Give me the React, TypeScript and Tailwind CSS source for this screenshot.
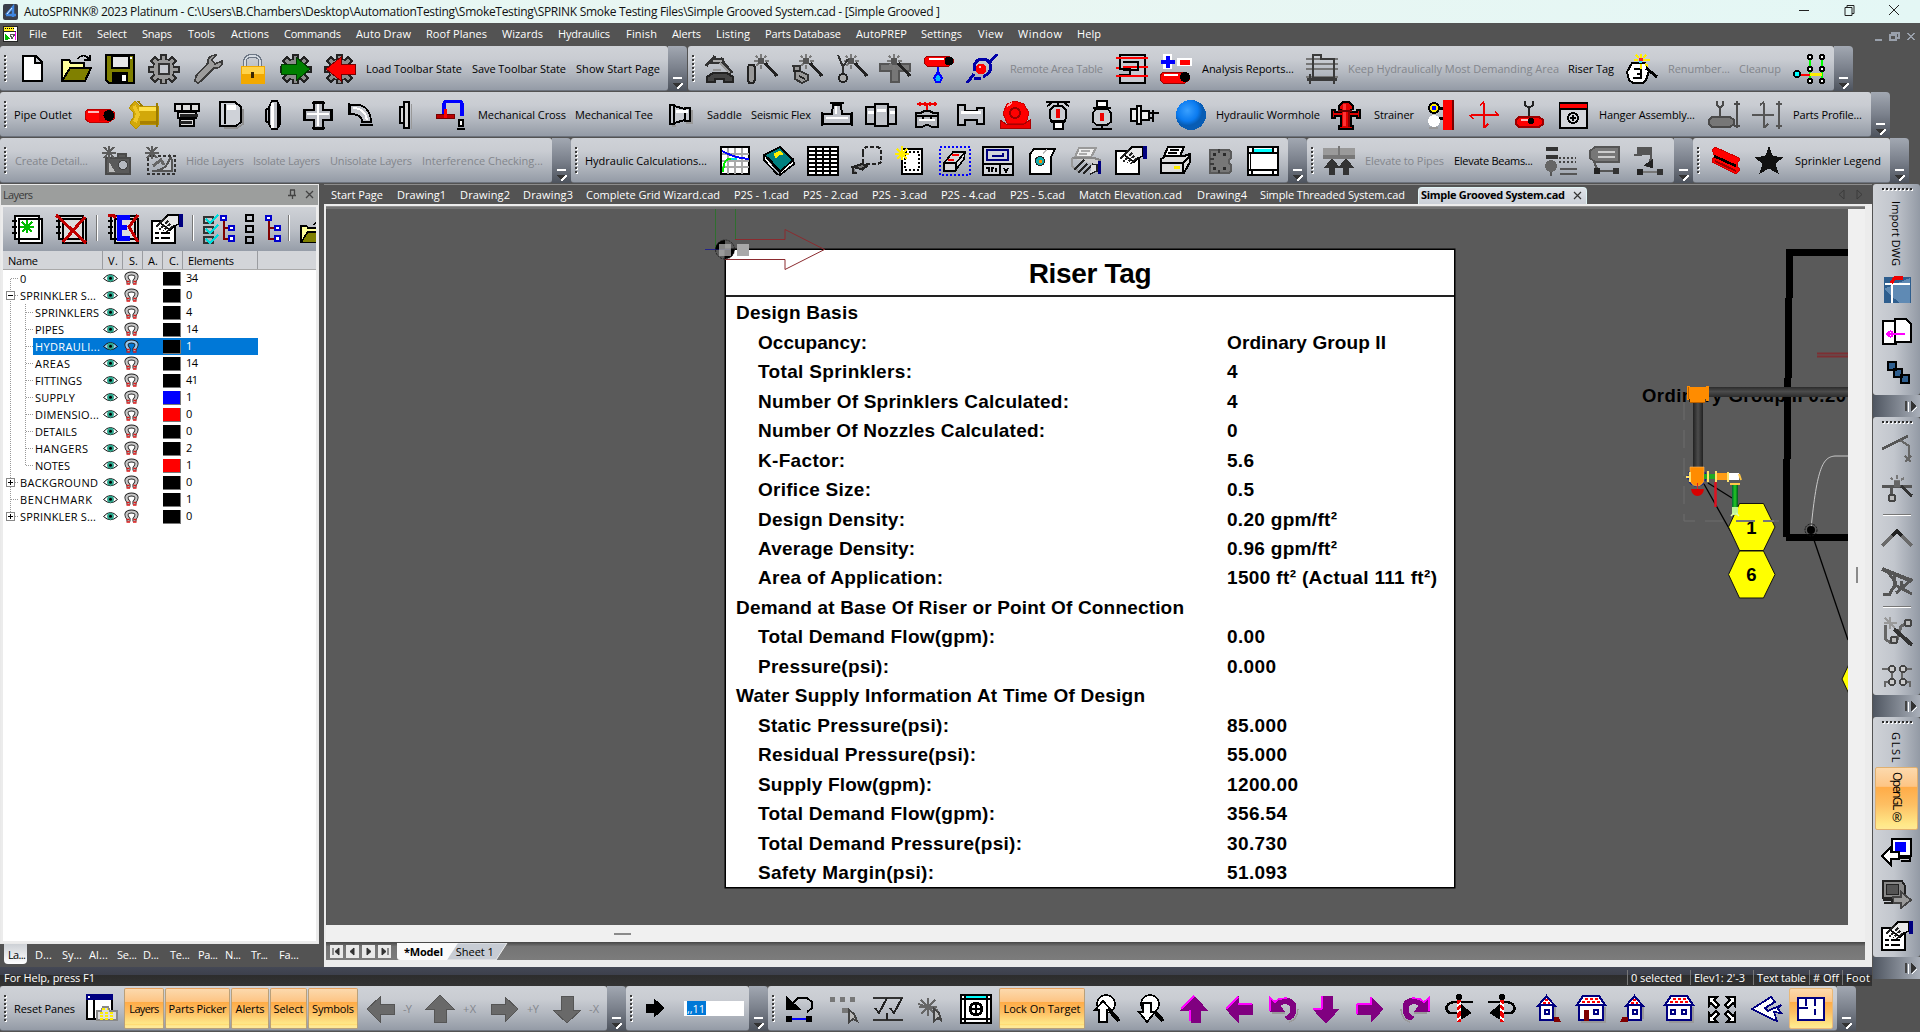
import React, { useLayoutEffect, useRef, useState } from "react";

/* ---------- text fitted to a given run length ---------- */
function Fit({ w, children, className = "", vertical = false }: { w: number; children: string; className?: string; vertical?: boolean }) {
  const ref = useRef<HTMLSpanElement>(null);
  const [ls, setLs] = useState<number | null>(null);
  useLayoutEffect(() => {
    const el = ref.current;
    if (!el || ls !== null) return;
    const natural = vertical ? el.offsetHeight : el.getBoundingClientRect().width;
    setLs((w - natural) / Math.max(1, children.length - 1));
  });
  return (
    <span
      ref={ref}
      className={"inline-block whitespace-pre leading-none shrink-0 " + (vertical ? "[writing-mode:vertical-rl] " : "") + className}
      style={ls === null ? undefined : { letterSpacing: ls }}
    >
      {children}
    </span>
  );
}

/* ---------- items along a bar ---------- */
type Item = { a: number; s: number; n: React.ReactNode };
function Track({ from, items, vertical = false, className = "" }: { from: number; items: Item[]; vertical?: boolean; className?: string }) {
  let prev = from;
  return (
    <div className={"flex items-center " + (vertical ? "flex-col w-full " : "h-full ") + className}>
      {items.map((it, k) => {
        const gap = it.a - prev;
        prev = it.a + it.s;
        return (
          <div
            key={k}
            className={"shrink-0 flex items-center " + (vertical ? "justify-center" : "")}
            style={vertical ? { marginTop: gap, height: it.s } : { marginLeft: gap, width: it.s }}
          >
            {it.n}
          </div>
        );
      })}
    </div>
  );
}

const P = (d: string, f = "none", s = "#000", w = 2) => <path d={d} fill={f} stroke={s} strokeWidth={w} />;
const W = "#fff";
const gearPath = "M13 1h5v4l3 1 3-3 4 4-3 3 1 3h5v5h-5l-1 3 3 3-4 4-3-3-3 1v4h-5v-4l-3-1-3 3-4-4 3-3-1-3H1v-5h4l1-3-3-3 4-4 3 3 3-1z";
const wand = (c: string) => (
  <g>
    {P("M19 9L31 22", "none", "#222", 3)}
    {P("M15 0v4M15 11v4M8 7h4M19 7h4M10 2l2 2M20 2l-2 2M10 12l2-2", "none", "#7b7b7b", 1.6)}
    <rect x="12" y="4" width="6" height="6" fill={c} />
  </g>
);
const hand = (g: string) => (
  <g>
    {P("M9 9L17 1h11v9l-5 2-4 4z", g, "#000", 1.6)}
    {P("M5 13L14 4M8 16l9-9M12 17l7-7M16 18l5-6", "none", "#222", 1.6)}
    {P("M7 12l8 5M11 8l8 6", "none", "#fff", 1)}
    <rect x="28" y="0" width="4" height="13" fill="#000080" />
  </g>
);
const house = (door: React.ReactNode, wide: boolean) => (
  <g>
    {wide ? P("M2 11L8 2h16l6 9z", W, "#000080") : P("M7 12L15.5 2 24 12z", W, "#000080")}
    {wide ? P("M7 8h3M12 8h3M17 8h3M22 8h3M10 5h3M15 5h3M20 5h3", "none", "#f00", 2.2) : P("M12 9h3M17 9h2M14 6h3", "none", "#f00", 2.2)}
    {wide ? P("M4 11h24v15H4z", W, "#000080") : P("M9 11h13v15H9z", W, "#000080")}
    {P(wide ? "M30 13v15H6" : "M24 13v12", "none", "#999", 1.4)}
    {door}
  </g>
);
const curvedArrow = (
  <g>
    {P("M3 4l5 4c5-6 21-6 21 6 0 7-3 11-8 12l-3-3c4-1 6-4 6-8 0-6-8-7-11-3l4 5H3z", "#800080", "#800080", 1)}
    {P("M3 17V4l5 4 4-3 8-1", "none", "#f0f", 1.8)}
    {P("M22 28c6-1 9-7 9-13M5 19h13", "none", "#999", 1.4)}
  </g>
);

const ICONS: Record<string, React.ReactNode> = {
  new: P("M6 2h13l6 6v19H6zM18 2v7h7", W),
  open: <g>{P("M1 27V6h7l2 3h13v5", "#ffff9a")}{P("M1 27L9 14h21l-6 13z", "#808000")}{P("M17 5c3-5 8-4 11 0M29 1v5h-6", "none", "#000", 1.5)}</g>,
  save: <g>{P("M2 1h28v28H5l-3-3z", "#808000")}{P("M8 2h17v12H8z", "#e8e8e8")}{P("M9 19h14v10H9z", "#000")}<rect x="18" y="21" width="4" height="6" fill={W} /><rect x="26" y="3" width="2" height="2" fill={W} /></g>,
  gear: <g>{P(gearPath, "#9a9a9a", "#2c2c2c", 1.6)}{P("M11 10h10v10H11z", "#c4c7cd", "#333")}</g>,
  wrench: <g>{P("M2 27l1-5L15 9c-1-5 3-8 8-8l-4 5 3 4 7-3c1 5-4 8-8 7L8 27l-3 2z", "#9c9c9c", "#3c3c3c", 1.6)}</g>,
  lock: <g>{P("M8 14V7c0-7 15-7 15 0v7", "none", "#6d7785", 4)}{P("M8 14V7c0-7 15-7 15 0v7", "none", "#d5dbe2", 1.5)}<rect x="4" y="12" width="24" height="18" fill="#f2a900" /><rect x="5" y="13" width="22" height="7" fill="#ffd34a" /><rect x="14" y="18" width="3" height="6" fill="#3a2600" /></g>,
  gearG: <g>{P(gearPath, "#8c8c8c", "#222", 1.6)}{P("M1 10h15V3l14 12-14 12v-7H1z", "#008000", "#003c00", 1)}</g>,
  gearR: <g>{P(gearPath, "#8c8c8c", "#222", 1.6)}{P("M31 10H17V3L2 15l15 12v-7h14z", "#f00", "#700", 1)}</g>,
  helmet: <g>{P("M2 12L11 2M16 4l12 15", "none", "#333", 3)}{P("M9 5h10v4H7z", "#aaa", "#333", 1.6)}{P("M3 28v-5l6-4h14l6 4v5h-9v-3H11v3z", "#444", "#222")}{P("M16 9l10 10M9 16h8", "none", "#999", 2)}</g>,
  wandO: <g>{wand("#555")}{P("M3 11h5l1 3v12l-2 3H3l-1-3V13z", "#999", "#222")}</g>,
  wandE: <g>{wand("#555")}{P("M2 12h7v5l8 4v5l-6 3-7-4v-8z", "#999", "#333")}{P("M2 17h7M8 22l6 3", "none", "#222")}</g>,
  wandH: <g>{wand("#555")}{P("M2 1l5 12 5-8M7 13v7", "none", "#333")}<circle cx="7" cy="24" r="4" fill="#aaa" stroke="#222" strokeWidth="2" /></g>,
  wandT: <g>{P("M1 10h30v7H20v11h-8V17H1z", "#777", "#555")}{wand("#555")}</g>,
  pipeDrop: <g>{P("M4 2h22l4 3v4l-4 3H4L1 9V5z", "#f00", "#900", 1)}{P("M6 5h15", "none", W)}<circle cx="26" cy="7" r="4.5" fill="#000" />{P("M15 13v7", "none", "#00f")}{P("M15 18l4 6-2 4h-4l-2-4z", "#0bf", "#00f")}</g>,
  swirl: <g>{P("M1 29l7-9M24 8L31 0M9 17c-3-8 3-12 8-12 8 1 9 8 6 14l-6 4M8 24h7", "none", "#0000a8", 3)}<circle cx="15" cy="15" r="5.5" fill="#f00" /><circle cx="14" cy="13" r="1.6" fill="#fbb" /></g>,
  plot: <g>{P("M4 1h25v28H4v-8h10v-6H4z", "#c9ccd2")}{P("M0 4h32M0 14h3M7 13h25M0 22h32", "none", "#f00")}{P("M7 8h15v8H7", "none", "#000")}</g>,
  plusminus: <g><rect x="3" y="0" width="9" height="15" fill={W} /><rect x="17" y="4" width="15" height="8" fill={W} />{P("M1 8h14M8 2v12", "none", "#00f", 4)}{P("M20 8h10", "none", "#f00", 5)}{P("M3 18h22l4 3v5l-4 3H3L0 26v-4z", "#f00", "#900", 1)}{P("M4 21h14", "none", W)}<circle cx="25" cy="23" r="5" fill="#000" /></g>,
  plotG: <g>{P("M0 5h32M0 10h32M0 15h32M0 23h32", "none", "#777")}{P("M7 1h8v4h13v19H7zM4 20v10M28 20v10", "none", "#3a3a3a")}{P("M1 25h30", "none", "#3a3a3a", 3)}</g>,
  three: <g>{P("M6 9h13l4 8-3 9-3 3H7l-4-3-2-8z", W)}{P("M8 15h7v5h-4M15 19v5H7", "none", "#000", 2.2)}{P("M20 14l11 9", "none", "#000", 3)}{P("M15 0v4M15 10v5M8 6h4M17 6h7M10 1l3 3M20 1l-3 3M19 10l3 2", "none", "#fe0", 2)}<rect x="13" y="4" width="4" height="3" fill="#f22" /><rect x="13" y="7" width="3" height="2" fill="#2df" /></g>,
  nodes: <g>{P("M17 4v22M29 4v22", "none", "#0f0")}{P("M17 20h12", "none", "#fe0", 3)}{P("M5 21h12", "none", "#f00")}<circle cx="4" cy="20" r="3" fill="#0ff" stroke="#000" strokeWidth="1.6" />{[3, 15, 27].map((y) => [17, 29].map((x) => <circle key={x * 40 + y} cx={x} cy={y} r="2.2" fill={W} stroke="#000" strokeWidth="1.6" />))}</g>,
  pipeR: <g>{P("M5 9h20l5 3v7l-5 3H5l-4-3v-7z", "#f00", "#b00", 1)}{P("M4 12h14", "none", "#fbb", 2)}<rect x="15" y="10" width="10" height="11" fill="#d00" /><circle cx="25" cy="15.500" r="5.500" fill="#000" /></g>,
  wye: <g>{P("M1 8l6-7 5 5h18v18H13l-5 5-6-6 3-5V12z", "#d2a80a", "#b89200", 1)}{P("M11 9h17", "none", "#ffe04a", 4)}{P("M6 6l4 8-3 8", "none", "#eec628", 4)}{P("M29 3v24M10 1l4 5", "none", "#9a7a00")}{P("M12 22h16", "none", "#a88000", 3)}</g>,
  cap: <g>{P("M4 4h24v7H4zM7 12h18v6H7zM9 19h14v7H9z", "#ddd", "#000", 2.2)}{P("M11 4v7M20 4v7", "none", "#000")}{P("M9 15h18M9 22h12", "none", "#222", 3)}</g>,
  elbowD: <g>{P("M4 2h15l6 5v15l-5 4H4zM9 4v20", "#cfd2d8")}<rect x="11" y="5" width="9" height="5" fill={W} />{P("M27 9v15l-6 4H8", "none", "#8f8f8f", 1.6)}</g>,
  coup: <g>{P("M14 1h5l3 6v17l-3 5h-5l-3-5V7z", "#bfc2c8")}{P("M14 3v25", "none", W, 3)}{P("M20 4v22M11 8l-3 2v11l3 2", "none", "#000", 2)}</g>,
  cross: <g>{P("M12 2h9v8h9v10h-9v9h-9v-9H2V10h10z", "#b8bbc2")}{P("M16 4v22M5 14h22", "none", W, 2.5)}{P("M10 3h13M3 9v12M29 9v12M10 28h13", "none", "#000", 2.4)}</g>,
  elbow: <g>{P("M4 5h10c7 2 11 9 11 17h-9c0-5-3-8-12-8z", "#c3c6cc", "#000", 1.8)}{P("M3 3v12M14 25h13", "none", "#000", 2)}{P("M7 8c8 0 13 5 14 12", "none", W, 2)}</g>,
  cap2: <g>{P("M14 2h5v26h-5zM13 7h-3v16h3", "#dadada", "#000", 2.2)}{P("M21 4v25", "none", "#999", 1)}</g>,
  hose: <g>{P("M9 16V4q0-3 3-3h10q5 0 5 4v11", "none", "#00f", 3.4)}{P("M1 14h18v4H1z", "#b00", "#700", 1)}{P("M10 9v9", "none", "#f00", 3)}{P("M24 20h4v6h-4zM22 29h8", W, "#000", 1.6)}</g>,
  bell: <g>{P("M5 5h4v19H5zM9 6l11 3v11L9 23zM20 8h5v13h-5z", "#c9ccd2")}{P("M11 11h12", "none", W, 3)}{P("M7 26h4M27 10v13h-6", "none", "#999", 1.4)}</g>,
  tee: <g>{P("M2 14h9l1-9h8l1 9h9v10H2z", "#c0c3ca")}{P("M9 3h14M1 12v14M31 12v14", "none", "#000", 2.4)}{P("M5 18h22M15 6v8", "none", W, 2.5)}</g>,
  coup3: <g>{P("M1 7h9v17H1zM10 4h13v22H10zM23 7h8v17h-8z", "#bfc2c8", "#000", 2.2)}{P("M3 12h6M12 10h9M25 12h5", "none", W, 3)}</g>,
  valve: <g>{P("M6 4h20M9 2v4M14 2v4M19 2v4M24 2v4M16 4v8", "none", "#e00", 1.8)}{P("M5 13h5l3-2h6l3 2h5v14h-6l-4-2h-2l-4 2H5z", "#b4b7bd")}{P("M5 16h22M12 16v3M20 16v3", "none", "#000", 1.5)}{P("M8 20h16", "none", W, 2)}</g>,
  reducer: <g>{P("M3 5h7v6h12V8h7v16h-7v-4H10v5H3z", "#c3c6cc")}{P("M6 12h20", "none", W, 3)}</g>,
  pump: <g>{P("M8 23L4 13l4-9 8-3 9 3 5 9-3 10z", "#f00", "#c00", 1)}<circle cx="16" cy="13" r="5" fill="none" stroke="#900" strokeWidth="2" />{P("M1 20v8h30v-8l-6 4H7z", "#e00", "#a00", 1)}{P("M8 6l5-3", "none", "#f99", 2)}</g>,
  headU: <g>{P("M4 2h24M10 3l-5 3M22 3l5 3M16 2v3M10 22l-2-4V10l4-4h8l4 4v8l-2 4z", "#c9ccd2", "#000", 1.8)}<rect x="14" y="9" width="4" height="9" fill="#e00" />{P("M8 21h16M12 23v6h9v-6", W)}</g>,
  headD: <g>{P("M11 1h10v6H11zM7 8h18", W)}{P("M10 9h12l3 4v9l-4 3h-10l-4-3v-9zM16 25v4M6 29h20", "#c9ccd2", "#000", 1.8)}<rect x="14" y="13" width="4" height="8" fill="#e00" /></g>,
  headS: <g>{P("M2 9h6v12H2zM8 6h4v18H8zM12 11h8v9h-8zM20 13h10M20 18h4M24 10v12", "#eee", "#000", 2)}</g>,
  ball: <g><defs><radialGradient id="bl" cx="0.38" cy="0.35"><stop offset="0" stopColor="#39a0ff" /><stop offset="0.7" stopColor="#0b7bf0" /><stop offset="1" stopColor="#075cb4" /></radialGradient></defs><circle cx="16" cy="15" r="15" fill="url(#bl)" /></g>,
  hydrant: <g>{P("M9 6l4-4h6l4 4v3l-2 1v2h6v-2h3v8h-3v-2h-6v10h2v3H9v-3h2V16H5v2H2v-8h3v2h6v-2L9 9z", "#e00000", "#000", 1.6)}{P("M14 4v22", "none", "#f33", 3)}{P("M19 10v17", "none", "#800")}{P("M8 11h14", "none", "#600", 1.6)}</g>,
  wall: <g><rect x="17" y="0" width="9" height="30" fill="#f00" /><rect x="26" y="0" width="2" height="30" fill="#700" /><circle cx="8" cy="8" r="5" fill="#fe0" stroke="#000" strokeWidth="2" /><rect x="6" y="6" width="4" height="4" fill="#00f" />{P("M12 8h5M10 18h7", "none", "#000", 3)}<circle cx="8" cy="21" r="6" fill={W} />{P("M3 28h9", "none", "#999")}</g>,
  crossR: P("M3 15h27M16 3v25M12 5l4-3M16 28l4-4M5 19l-3-4M27 12l4 3", "none", "#e00", 1.6),
  hang: <g>{P("M11 1v4l4 3v8M19 1v4l-4 3", "none", "#222")}{P("M5 17h20l4 3v4l-4 3H5l-3-3v-4z", "#f00", "#900")}{P("M7 20h12", "none", "#fbb")}<circle cx="17" cy="21" r="3" fill="#000" /></g>,
  schedule: <g>{P("M3 3h27v25H3z", "#d5d7dc")}<rect x="3" y="4" width="27" height="5" fill="#f00" />{P("M3 9h27", "none")}<circle cx="16" cy="18" r="5" fill="none" stroke="#000" strokeWidth="2" />{P("M16 15v6M13 18h6", "none", "#000", 1.6)}</g>,
  hangG: <g>{P("M9 1v4l3 3v8M15 1v4l-3 3M29 1v27M26 4h6M26 26h6", "none", "#4a4a4a")}{P("M4 17h18l4 3v4l-4 3H4l-3-3v-4z", "#777", "#4a4a4a")}</g>,
  crossG: P("M1 15h22M13 3v25M9 5l4-3M13 28l4-4M28 1v28M25 4h6M25 26h6", "none", "#555", 1.8),
  det1: <g>{P("M5 12h24v16H5z", "#5a5a5a", "#4a4a4a")}{P("M17 8h8v4h-8z", "#5a5a5a", "#4a4a4a")}<circle cx="22" cy="19" r="4.500" fill="#b5b9c0" stroke="#444" />{P("M8 17v8h5z", "#bbb", "#bbb", 1)}{P("M8 0v13M1 7h14M3 1l10 11M13 1L3 12", "none", "#5c5c5c", 1.8)}</g>,
  det2: <g>{P("M8 25c10 0 16-4 18-14l2 3v11z", "#c4c7cd", "#555")}<path d="M4 10h27v18H4z" fill="none" stroke="#333" strokeWidth="2.200" strokeDasharray="3 2" />{P("M9 20l8-6 3 5", "none", "#666", 3)}{P("M8 0v13M1 7h14M3 1l10 11M13 1L3 12", "none", "#5c5c5c", 1.8)}</g>,
  graph: <g>{P("M2 1h28v27H2z", W)}{P("M9 2v26M16 2v26M23 2v26M3 8h27M3 15h27M3 21h27", "none", "#aaa", 1.4)}{P("M3 5c8 4 14 7 27 8", "none", "#00f")}{P("M4 26c1-12 3-13 8-13", "none", "#0e0")}{P("M12 13h6", "none", "#0dd")}</g>,
  book: <g>{P("M1 9L17 1l13 13-13 12z", "#008080")}{P("M17 26l13-12 1 4-14 11zM1 9v5l14 15", W, "#000", 1.8)}{P("M4 11l12 13", "none", "#000", 2)}{P("M11 8l6-3 3 3-4 1-3 3z", "#fe0", "#fe0", 1)}</g>,
  sheet: <g>{P("M1 1h30v28H1z", W)}{P("M1 5h30M1 9h30M1 13h30M1 17h30M1 21h30M1 25h30M9 1v28M16 1v28M23 1v28", "none", "#000", 1.5)}</g>,
  lasso: <g><path d="M12 7V3l3-2h12l3 2v13l-3 2H15l-3-2z" fill="none" stroke="#222" strokeWidth="2" strokeDasharray="4 2" />{P("M2 21l9-3 5 2-6 3zM2 21v6h4M11 24l5-4", "#777", "#222", 2)}</g>,
  newsheet: <g><path d="M8 3h20v25H8z" fill={W} stroke="#000" strokeWidth="2" /><path d="M11 6h14v18H11z" fill="none" stroke="#000" strokeWidth="1.5" strokeDasharray="2 2" />{P("M8 0v14M1 8h14M3 3l10 10M13 3L3 13", "none", "#fe0", 2)}</g>,
  eraser: <g><path d="M1 1h30v28H1z" fill="none" stroke="#00f" strokeWidth="2" strokeDasharray="2 2" />{P("M5 17l9-11h12l-1 7-9 12H5z", "#d8d8d8", "#000", 1.6)}{P("M5 17h12v8M17 17l9-11", "none", "#000", 1.6)}{P("M13 9h7M9 14h6", "none", "#f00", 2)}</g>,
  layout: <g>{P("M1 1h30v28H1zM1 18h30M18 18v11", "#d4d6db")}{P("M5 4h21v10H5zM10 10h11V7", "none", "#000080", 2)}{P("M4 22h3v4M10 26v-4h2M14 22v4M22 22l2 4 2-4", "none", "#000", 1.8)}</g>,
  scroll: <g>{P("M7 3h21l-4 8v17H3V8z", W)}{P("M20 3l-4 5", "none", "#bbb", 1.2)}<circle cx="13" cy="15" r="4.500" fill="#1aa" stroke="#222" strokeWidth="1.4" /><rect x="12" y="14" width="3" height="3" fill="#f80" /></g>,
  printG: <g>{P("M9 2h17l-5 9H5z", "#eee", "#999")}{P("M11 5h9M9 8h8", "none", "#aaa", 1.4)}{P("M2 12h22l6 2v6", "#ccc", "#888")}{P("M2 12v8l6 5", "none", "#999")}{P("M4 24L14 14M8 27l9-9M13 28l8-8", "none", "#222", 1.8)}{P("M22 18l5 1v6l-7 3", "#ddd", "#222", 1.4)}<rect x="28" y="15" width="3" height="13" fill="#000080" /></g>,
  props: <g>{P("M1 5h23v23H1z", W)}{hand("#e8e8e8")}</g>,
  print: <g>{P("M9 1h16l-4 9H5z", W)}{P("M11 4h9M9 7h9", "none", "#000", 1.4)}{P("M2 13l5-3h18l6-2v8l-6 11H2z", "#ddd")}{P("M2 17h22v10M24 17l6-6", "none")}<rect x="15" y="20" width="6" height="3" fill="#fe0" /></g>,
  plugG: <g>{P("M6 4h19l2 2v6l-2 2v3l2 2v6l-2 2H6z", "#777", "#5a5a5a")}{P("M9 8h3M19 8h3M9 22h3M19 22h3", "none", "#2a2a2a", 3)}{P("M15 3v4M15 24v3M6 13h4M6 18h4", "none", "#3a3a3a", 2)}</g>,
  win: <g>{P("M1 1h30v28H1z", W)}<rect x="7" y="3" width="18" height="4" fill="#0ff" />{P("M1 7h30M1 24h30M6 1v6M26 1v6M5 24v5M26 24v5M3.500 7v17", "none", "#000", 1.8)}</g>,
  elev: <g><rect x="0" y="2" width="32" height="7" fill="#9a9a9a" /><rect x="0" y="9" width="32" height="4" fill="#777" />{P("M16 0v12", "none", "#777", 1.4)}{P("M9 29V19M23 29V19", "none", "#333", 6)}{P("M9 13l7 8H2zM23 13l7 8H16z", "#333", "#333", 1)}</g>,
  g1: <g>{P("M1 3h12M1 11h12", "none", "#333", 4)}<path d="M14 12h17M14 16h17" stroke="#444" strokeWidth="1.600" strokeDasharray="2 2" /><circle cx="6" cy="20" r="6" fill="#666" />{P("M6 26v4M15 23h17M15 28h17", "none", "#555", 2.6)}</g>,
  g2: <g>{P("M6 1h24v15H6L1 12V5z", "#777", "#555")}{P("M9 6h17M9 11h17", "none", "#ccc", 1.6)}{P("M5 16l4 9M9 25h20", "none", "#555")}<rect x="5" y="22" width="6" height="6" fill="#222" /><rect x="24" y="22" width="6" height="6" fill="#333" /></g>,
  g3: <g>{P("M5 2h13v6H5zM1 9h8M18 8v8l-4 5", "#555", "#555")}{P("M13 19l6-4v6z", "#222", "#222")}{P("M6 26h23", "none", "#777")}<rect x="4" y="23" width="6" height="6" fill="#222" /><rect x="24" y="23" width="6" height="6" fill="#333" /></g>,
  beam: <g>{P("M3 4l3-3 24 11v3l-2 2v4l2 1v3l-3 3L3 16v-3l3-2z", "#f00", "#c00", 1)}{P("M5 10l22 10", "none", "#000", 2.6)}{P("M6 15l21 10", "none", "#900", 2)}</g>,
  star: P("M16 1.500l3.500 9 9.500 1-7 6.500 3 9-9-5-9 5 3-9-7-6.500 9.500-1z", "#111", "#111", 1),
  panes: <g>{P("M1 1h25v24H1z", W)}<rect x="0" y="0" width="27" height="6" fill="#000080" /><rect x="2" y="2" width="2" height="2" fill={W} />{P("M8 6v19", "none")}{P("M11 17h4l2-4h5l2 4h7v9H11z", "#ddd", "#888", 1.5)}<path d="M14 19h15M14 22h15M14 25h15M16 15h6" stroke="#fe0" strokeWidth="2" strokeDasharray="3 2" /></g>,
  aL: P("M3 15L16 3v7h14v10H16v8z", "#696969", "#555", 1),
  aU: P("M16 1l14 14h-8v13H10V15H2z", "#696969", "#555", 1),
  aR: P("M30 15L17 3v7H3v10h14v8z", "#696969", "#555", 1),
  aD: P("M16 29L2 16h8V2h12v14h8z", "#696969", "#555", 1),
  go: P("M25 14L15 5v5H7v8h8v5z", "#000", "#000", 1),
  undoS: <g>{P("M9 9l5-5h9l5 4v6l-5 4", "none")}{P("M3 4v11h12z", "#000")}{P("M5 25h22", "none", "#00f")}<rect x="2" y="22" width="6" height="6" fill="#000" /><rect x="22" y="22" width="6" height="6" fill="#000" /></g>,
  selG: <g>{P("M2 5h5M12 5h5M22 5h5M14 16h6", "none", "#777", 5)}{P("M21 16v12l4-3 4 2-3-7z", "#bbb", "#444")}</g>,
  chk: <g>{P("M1 4h30M1 26h30", "none", "#333", 2.5)}{P("M3 14l4 5 8-15M18 14l4 5L30 4M15 26v-7", "none", "#222", 2)}</g>,
  burst: <g>{P("M12 4v18M3 13h18M5 6l14 14M19 6L5 20M2 10l20 6", "none", "#666")}{P("M18 15v12l4-3 3 2-2-7z", "#bbb", "#444")}</g>,
  target: <g>{P("M1 1h30v28H1z", W)}<rect x="6" y="2" width="20" height="3" fill="#0ff" />{P("M1 5h30M1 25h30M5 1v28M27 1v28", "none", "#000", 1.8)}<circle cx="16" cy="15" r="6" fill={W} stroke="#000" strokeWidth="2.600" />{P("M16 9v6h6M16 21v-6h-6", "none", "#000", 1.5)}</g>,
  zin: <g><circle cx="15" cy="10" r="9" fill={W} stroke="#000" strokeWidth="1.800" />{P("M20 18l8 9", "none", "#000", 4)}{P("M12 7l8 9h-4v12H8V16H4z", W, "#000", 1.8)}</g>,
  zout: <g><circle cx="15" cy="10" r="9" fill={W} stroke="#000" strokeWidth="1.800" />{P("M20 18l8 9", "none", "#000", 4)}{P("M12 28l8-10h-4V9H8v9H4z", W, "#000", 1.8)}</g>,
  pU: <g>{P("M16 2l13 14h-7v12h-9V16H3z", "#800080", "#800080", 1)}{P("M3 15L16 2M12 16v11", "none", "#f0f", 1.8)}</g>,
  pD: <g>{P("M16 29l13-14h-7V2h-9v13H3z", "#800080", "#800080", 1)}{P("M3 15h9M12 15V2", "none", "#f0f", 1.8)}</g>,
  pL: <g>{P("M3 15L15 3v7h14v10H15v8z", "#800080", "#800080", 1)}{P("M3 15L15 3M15 10h14", "none", "#f0f", 1.8)}</g>,
  pR: <g>{P("M29 15L17 3v7H3v10h14v8z", "#800080", "#800080", 1)}{P("M3 10h14V3M3 10v10", "none", "#f0f", 1.8)}</g>,
  pCCW: curvedArrow,
  pCW: <g transform="translate(32 0) scale(-1 1)">{curvedArrow}</g>,
  rotA: <g>{P("M30 8H10c-7 2-9 8-3 11h18", "none", "#000", 2.6)}{P("M19 12l8 7-8 5z", "#000", "#000", 2)}{P("M16 5v23", "none", "#e00", 4)}<path d="M14 12l4-3M14 18l4-3M14 26l4-3" stroke={W} strokeWidth="2" /><circle cx="16" cy="3" r="3" fill="#000" /></g>,
  rotB: <g transform="translate(32 0) scale(-1 1)">{P("M30 8H10c-7 2-9 8-3 11h18", "none", "#000", 2.6)}{P("M19 12l8 7-8 5z", "#000", "#000", 2)}{P("M16 5v23", "none", "#e00", 4)}<path d="M14 12l4-3M14 18l4-3M14 26l4-3" stroke={W} strokeWidth="2" /><circle cx="16" cy="3" r="3" fill="#000" /></g>,
  h1: house(<g>{P("M14 16h4v4h-4z", W, "#000080")}{P("M23 23h4l2 4h-6z", "#800000", "#800000", 1)}</g>, false),
  h2: house(<g>{P("M9 16h4v10H9z", "#800000", "#800000", 1)}{P("M19 16h4v4h-4z", W, "#000080")}</g>, true),
  h3: house(<g>{P("M14 16h4v4h-4z", W, "#000080")}{P("M8 23H4l-2 4h6z", "#800000", "#800000", 1)}</g>, false),
  h4: house(<g>{P("M8 16h4v4H8zM19 16h4v4h-4z", W, "#000080")}</g>, true),
  expand: <g>{P("M3 3h8l-3 3 5 5-3 3-5-5-2 3zM29 3h-8l3 3-5 5 3 3 5-5 2 3zM3 28h8l-3-3 5-5-3-3-5 5-2-3zM29 28h-8l3-3-5-5 3-3 5 5 2-3z", W, "#000", 1.8)}</g>,
  plane: <g>{P("M1 15L20 3l4 5-10 6 3 3 13-6-3 4 3 4-7-1 3 9-5-2z", W, "#000080", 1.8)}</g>,
  plan: <g>{P("M3 4h26v22H3z", W, "#000080", 2.2)}{P("M11 4v8M20 4v8M20 15v6M3 14h10", "none", "#000080", 2)}</g>,
  lNew: <g>{P("M8 5h23v24H8zM4 2h24v23H4z", W)}{P("M1 7h5M1 13h5M1 19h5", "none", "#000", 2.5)}{P("M16 6v13M9 13h14M11 8l10 10M21 8L11 18", "none", "#0b0", 1.8)}</g>,
  lDel: <g>{P("M8 5h23v24H8zM4 2h24v23H4z", "#ddd")}{P("M1 7h5M1 13h5M1 19h5", "none", "#000", 2.5)}{P("M1 1l30 28M30 3L8 28", "none", "#c00000", 3)}</g>,
  lE: <g>{P("M8 5h23v24H8zM4 2h24v23H4z", "#ddd")}{P("M1 7h5M1 13h5M1 19h5", "none", "#000", 2.5)}{P("M23 3H12v21h11M12 13h8", "none", "#00f", 5)}{P("M1 1h5l3 3M31 1l-9 12 9 15", "none", "#c00000", 3)}</g>,
  lProps: <g>{P("M1 7h23v22H1z", W)}{P("M4 19h4M10 18.500h9M4 24h4M10 24h9", "none")}{hand("#e8e8e8")}</g>,
  lChk: <g>{P("M1 3h9v6H1zM1 13h9v6H1zM1 23h9v6H1z", "none", "#333", 1.6)}{P("M3 5l4 4 8-8M3 15l4 4 8-8M3 25l4 4 8-8", "none", "#0dd", 2)}{P("M21 6v19h5M21 14h5", "none", "#800000", 2)}{P("M18 2h5v4h-5zM26 12h5v4h-5zM26 22h5v5h-5z", W, "#00c", 2)}</g>,
  lBox: P("M12 1h7v6h-7zM12 12h7v6h-7zM12 23h7v6h-7z", "none", "#000", 2),
  lTree: <g>{P("M12 6v19h5M12 14h5", "none", "#800000", 2)}{P("M9 2h5v4H9zM18 12h5v4h-5zM18 22h5v5h-5z", W, "#00c", 2)}</g>,
  dwg: <g><rect x="3" y="2" width="27" height="26" fill="#2e5e8e" />{P("M4 14L28 4v23H18z", "#5f8ab4", "#5f8ab4", 1)}{P("M4 9h25M11 5v23", "none", W, 2)}{P("M10 8l4-5h8", "none", "#e00", 3.4)}</g>,
  pages: <g>{P("M2 4h13v23H2z", W)}{P("M14 2h11l5 5v18H14z", W)}{P("M6 17h18M11 14v6M5 17l5-3M5 17l5 3", "none", "#f0f", 2)}</g>,
  cubes: <g>{P("M7 4h8v8H7zM13 11h8v8h-8zM20 17h8v8h-8z", "#2e5e8e", "#000", 2.2)}</g>,
  r1: <g>{P("M1 16L27 3", "none", "#555", 3)}{P("M19 7l9 6v11M24 23l6 6M30 23l-6 6", "none", "#666", 2.4)}</g>,
  r2: <g>{P("M1 11h30M10 12v10", "none", "#555", 3)}<circle cx="11" cy="23" r="3.500" fill="#bbb" stroke="#444" strokeWidth="2" />{P("M20 11l11 10", "none", "#333", 3)}{P("M16 0v4M10 3l2 2M23 3l-3 2M13 6h6", "none", "#777", 2)}<rect x="13" y="6" width="6" height="6" fill="#666" /></g>,
  r3: <g>{P("M1 23L16 8l15 15", "none", "#6a6a6a", 3.4)}{P("M11 13l5-5 5 5", "none", "#222", 3.4)}</g>,
  r4: <g>{P("M1 2l30 12", "none", "#555", 4)}{P("M6 4l9 12-7 12M13 8v13M31 12L15 26M20 14v8", "none", "#555", 3)}{P("M2 27h8M14 18l17 9", "none", "#555", 3)}</g>,
  r5: <g>{P("M4 8v14l6 4 6-3 4-14 7-3", "none", "#666", 3)}{P("M13 12l18 16", "none", "#333", 4)}{P("M9 0v12M3 6h13M4 1l10 10", "none", "#999", 1.6)}<circle cx="27" cy="6" r="3.500" fill="#bbb" stroke="#444" strokeWidth="2" /><circle cx="13" cy="23" r="3.500" fill="#bbb" stroke="#444" strokeWidth="2" /></g>,
  r6: <g>{P("M1 8h10v13H4v5M31 8H21v13h8v5", "none", "#666", 2.4)}{[[11, 8], [22, 8], [11, 21], [22, 21]].map(([x, y]) => <circle key={x + y * 40} cx={x} cy={y} r="3.200" fill="#ccc" stroke="#444" strokeWidth="2" />)}</g>,
  mon1: <g>{P("M11 2h19v17H11z", W)}<rect x="14" y="5" width="11" height="10" fill="#00f" />{P("M1 19l9-9v5h8v7h-8v6z", W)}{P("M19 21h10v3H20", "#ccc", "#000", 1.6)}</g>,
  mon2: <g>{P("M2 2h19l3 5v12H2z", "#888", "#222")}<rect x="5" y="5" width="12" height="10" fill="#555" stroke="#222" />{P("M12 18h8v-5l10 8-10 8v-5h-8z", "#999", "#444", 1.8)}{P("M2 21h9v3H3", "none", "#222")}</g>,
};

const Icon = ({ n, w = 32, h = 30 }: { n: string; w?: number; h?: number }) => (
  <svg width={w} height={h} viewBox="0 0 32 30" shapeRendering="crispEdges" className="mt-px shrink-0">
    {ICONS[n]}
  </svg>
);

const t = (a: number, b: number, s: string, dis = false): Item => ({
  a,
  s: b - a,
  n: <Fit w={b - a} className={dis ? "text-[#83868c]" : "text-black"}>{s}</Fit>,
});
const i = (c: number, n: string): Item => ({ a: c - 16, s: 32, n: <Icon n={n} /> });
const btn = (a: number, b: number, s: string, ta: number, tb: number): Item => ({
  a,
  s: b - a,
  n: (
    <div className="flex h-[41px] w-full items-center justify-center rounded-[2px] border border-[#b9a07a] border-t-[#e9a15b] bg-[linear-gradient(#fcd9ad_0%,#fdc585_32%,#ffac48_34%,#fdbf63_60%,#ffe787_88%,#ffd86e_92%,#ffe995_94%)]">
      <Fit w={tb - ta} className="text-black">{s}</Fit>
    </div>
  ),
});

const Dots = ({ vertical = false }: { vertical?: boolean }) =>
  vertical ? (
    <div className="flex gap-[2px]">
      {Array.from({ length: 8 }, (_, k) => (
        <i key={k} className="h-[2px] w-[2px] bg-[#2b2b2b] shadow-[1px_1px_0_#fff]" />
      ))}
    </div>
  ) : (
    <div className="flex flex-col gap-[2px]">
      {Array.from({ length: 7 }, (_, k) => (
        <i key={k} className="h-[2px] w-[2px] bg-[#3b3b3b] shadow-[1px_1px_0_#fff]" />
      ))}
    </div>
  );

function Bar({ from, to, items }: { from: number; to: number; items: Item[] }) {
  return (
    <div className="flex h-[45px] shrink-0" style={{ width: to - from }}>
      <div className="h-full flex-1 rounded-[3px] border-b border-[#6c727c] bg-[linear-gradient(#cfd2d7,#c9ccd2_30%,#b3b8c0_62%,#949ba6)]">
        <Track from={from} items={[{ a: from + 4, s: 2, n: <Dots /> }, ...items]} />
      </div>
      <div className="flex h-full w-[19px] shrink-0 flex-col items-center justify-end rounded-tr-[4px] bg-[linear-gradient(#a2a8b2,#7b818c_50%,#4d535d)] pb-px">
        <svg width="12" height="13" viewBox="0 0 12 13" shapeRendering="crispEdges">
          <path d="M1 1h9" stroke="#fff" strokeWidth="2" />
          <path d="M1 6h9L5.500 11z" fill="#333" />
          <path d="M5 12l5-5v-1" stroke="#fff" strokeWidth="1.500" fill="none" />
        </svg>
      </div>
    </div>
  );
}

const MENU: [number, number, string][] = [
  [29, 47, "File"], [62, 82, "Edit"], [97, 127, "Select"], [142, 172, "Snaps"], [188, 215, "Tools"], [231, 269, "Actions"], [284, 341, "Commands"],
  [356, 411, "Auto Draw"], [426, 487, "Roof Planes"], [502, 543, "Wizards"], [558, 610, "Hydraulics"], [626, 657, "Finish"], [672, 701, "Alerts"],
  [716, 750, "Listing"], [765, 841, "Parts Database"], [856, 907, "AutoPREP"], [921, 962, "Settings"], [978, 1003, "View"], [1018, 1062, "Window"], [1077, 1101, "Help"],
];
const TABS: [number, number, string][] = [
  [331, 383, "Start Page"], [397, 446, "Drawing1"], [460, 510, "Drawing2"], [523, 573, "Drawing3"], [586, 720, "Complete Grid Wizard.cad"],
  [734, 789, "P2S - 1.cad"], [803, 858, "P2S - 2.cad"], [872, 927, "P2S - 3.cad"], [941, 996, "P2S - 4.cad"], [1010, 1065, "P2S - 5.cad"],
  [1079, 1182, "Match Elevation.cad"], [1197, 1247, "Drawing4"], [1260, 1405, "Simple Threaded System.cad"],
];
const PANE_TABS: [number, number, string][] = [
  [35, 52, "D..."], [62, 82, "Sy..."], [89, 108, "Al..."], [117, 137, "Se..."], [143, 159, "D..."], [170, 190, "Te..."], [198, 218, "Pa..."],
  [225, 241, "N..."], [251, 268, "Tr..."], [279, 299, "Fa..."],
];
const LAYERS: [string, number, number, string, string][] = [
  ["0", 0, 6, "#000", "34"], ["SPRINKLER S...", 0, 76, "#000", "0"], ["SPRINKLERS", 1, 64, "#000", "4"], ["PIPES", 1, 29, "#000", "14"],
  ["HYDRAULI...", 1, 65, "#000", "1"], ["AREAS", 1, 35, "#000", "14"], ["FITTINGS", 1, 47, "#000", "41"], ["SUPPLY", 1, 40, "#00f", "1"],
  ["DIMENSIO...", 1, 64, "#f00", "0"], ["DETAILS", 1, 42, "#000", "0"], ["HANGERS", 1, 53, "#000", "2"], ["NOTES", 1, 35, "#f00", "1"],
  ["BACKGROUND", 0, 78, "#000", "0"], ["BENCHMARK", 0, 72, "#000", "1"], ["SPRINKLER S...", 0, 76, "#000", "0"],
];
const RISER: [string, number, string, number][] = [
  ["Design Basis", 122, "", 0], ["Occupancy:", 109, "Ordinary Group II", 159], ["Total Sprinklers:", 154, "4", 10], ["Number Of Sprinklers Calculated:", 311, "4", 10],
  ["Number Of Nozzles Calculated:", 287, "0", 10], ["K-Factor:", 87, "5.6", 27], ["Orifice Size:", 113, "0.5", 27], ["Design Density:", 147, "0.20 gpm/ft²", 110],
  ["Average Density:", 157, "0.96 gpm/ft²", 110], ["Area of Application:", 185, "1500 ft² (Actual 111 ft²)", 210], ["Demand at Base Of Riser or Point Of Connection", 448, "", 0],
  ["Total Demand Flow(gpm):", 237, "0.00", 38], ["Pressure(psi):", 131, "0.000", 49], ["Water Supply Information At Time Of Design", 409, "", 0],
  ["Static Pressure(psi):", 191, "85.000", 60], ["Residual Pressure(psi):", 218, "55.000", 60], ["Supply Flow(gpm):", 174, "1200.00", 71],
  ["Total Demand Flow(gpm):", 237, "356.54", 60], ["Total Demand Pressure(psi):", 264, "30.730", 60], ["Safety Margin(psi):", 176, "51.093", 60],
];

function TitleBar() {
  return (
    <div className="flex h-[23px] shrink-0 items-center bg-[linear-gradient(90deg,#e4f7f4,#eaf6f2_45%,#e4f7f5)] pl-[3px]">
      <svg width="15" height="16" viewBox="0 0 15 16">
        <rect width="15" height="16" rx="2" fill="#3a3f4a" />
        <path d="M3 11L10 3v10M3 11h10" stroke="#3f86e0" strokeWidth="2.500" fill="none" />
        <path d="M4 10L9 4" stroke="#e6f2ff" strokeWidth="1" />
      </svg>
      <Fit w={916} className="ml-[6px] text-[12px] text-[#111]">
        {"AutoSPRINK® 2023 Platinum - C:\\Users\\B.Chambers\\Desktop\\AutomationTesting\\SmokeTesting\\SPRINK Smoke Testing Files\\Simple Grooved System.cad - [Simple Grooved ]"}
      </Fit>
      <svg className="ml-auto mr-[19px] -mt-[3px]" width="104" height="14" viewBox="0 0 104 14" fill="none" stroke="#222" strokeWidth="1">
        <path d="M2 7.500h10M48 4.500h7v8h-7zM50 4.500V2.500h7v8h-2M92 2l10 10M102 2L92 12" />
      </svg>
    </div>
  );
}

function MenuBar() {
  return (
    <div className="flex h-[23px] shrink-0 items-center bg-[#535353] pb-px pl-[3px] text-white">
      <svg width="15" height="16" viewBox="0 0 15 16" shapeRendering="crispEdges">
        <rect width="15" height="16" fill="#fff" />
        <rect width="11" height="5" fill="#fe2" />
        <path d="M0 0.500h14M14.500 0v16M0 15.500h15M0.500 0v16M1 5.500h12" stroke="#222" />
        <path d="M2 2.500h9" stroke="#000" strokeDasharray="1 1" />
        <path d="M2 7l5 6-5 1z" fill="#0b0" />
        <path d="M7 8h5l-3 5z" fill="#fff" stroke="#555" />
        <path d="M12.500 6v8" stroke="#f0f" />
      </svg>
      <Track from={18} className="pb-px" items={MENU.map(([a, b, s]) => ({ a, s: b - a, n: <Fit w={b - a}>{s}</Fit> }))} />
      <svg className="ml-auto mr-[4px] mt-[5px]" width="42" height="11" viewBox="0 0 42 11" fill="none" stroke="#99a0ab" strokeWidth="1.500" shapeRendering="crispEdges">
        <path d="M1 9h7M16 4h6v5h-6zM18 4V2h7v5h-3M34 2l6 7M40 2l-6 7" />
      </svg>
    </div>
  );
}

function LayersPane() {
  return (
    <div className="flex w-[319px] shrink-0 flex-col">
      <div className="flex h-[760px] flex-col border border-[#e9e9e9] bg-[#9b9d9c]">
        <div className="flex h-[20px] shrink-0 items-center bg-[#9c9e9d] pb-[2px] pl-[2px] pr-[3px] text-[#3a3a3a]">
          <Fit w={30}>Layers</Fit>
          <svg className="ml-auto" width="28" height="11" viewBox="0 0 28 11" fill="none" stroke="#444" strokeWidth="1.300">
            <path d="M3 1h5M3.500 1v5M7.500 1v5M1 6.500h8M5.500 6.500V10M19 2l7 7M26 2l-7 7" />
          </svg>
        </div>
        <div className="flex flex-1 flex-col border-2 border-[#ececec] bg-white">
          <div className="flex h-[44px] shrink-0 items-center overflow-hidden bg-[linear-gradient(#cfd2d7,#bcc0c7_50%,#969da8)]">
            <Track
              from={3}
              className="pb-[2px]"
              items={[
                i(27, "lNew"), i(71, "lDel"), { a: 96, s: 2, n: <div className="h-[26px] w-[2px] border-l border-[#777] bg-white" /> }, i(123, "lE"), i(167, "lProps"),
                { a: 192, s: 2, n: <div className="h-[26px] w-[2px] border-l border-[#777] bg-white" /> }, i(219, "lChk"), i(250, "lBox"), i(273, "lTree"),
                { a: 288, s: 2, n: <div className="h-[26px] w-[2px] border-l border-[#777] bg-white" /> },
                { a: 298, s: 18, n: <div className="w-[18px] overflow-hidden pt-[8px]"><Icon n="open" w={30} h={24} /></div> },
              ]}
            />
          </div>
          <div className="flex h-[19px] shrink-0 items-center border-b border-[#a9a9a9] bg-[#d3d5d9]">
            {([[100, 30, "Name", 5], [20, 10, "V.", 5], [20, 9, "S.", 6], [20, 10, "A.", 5], [20, 10, "C.", 6], [75, 46, "Elements", 5]] as [number, number, string, number][]).map(([w, tw, s, p]) => (
              <div key={s} className="flex h-full shrink-0 items-center border-r border-[#9a9ca0]" style={{ width: w, paddingLeft: p }}>
                <Fit w={tw} className="text-black">{s}</Fit>
              </div>
            ))}
          </div>
          <div className="relative">
            {LAYERS.map(([s, lv, w, c, n], k) => {
              const sel = k === 4;
              return (
                <div key={k} className="flex h-[17px] items-center">
                  <div className={lv ? "w-[30px]" : "w-[15px]"} />
                  <div className={"flex h-full items-center " + (sel ? "bg-[#0078d7] text-white" : "text-black")}>
                    <div className={"flex items-center pl-[2px] " + (lv ? "w-[70px]" : "w-[85px]")}>
                      <Fit w={w}>{s}</Fit>
                    </div>
                    <svg width="15" height="11" viewBox="0 0 15 11" className="mb-px shrink-0">
                      <path d="M0.500 5.500Q7.500 -2.500 14.500 5.500Q7.500 12 0.500 5.500z" fill={sel ? "#9cc9ee" : "#fff"} stroke="#111" />
                      <circle cx="7.500" cy="5.200" r="3.400" fill="#2aa68c" />
                      <circle cx="7.500" cy="5.200" r="1.500" fill="#000" />
                    </svg>
                    <svg width="15" height="15" viewBox="0 0 15 15" className="ml-[6px] shrink-0">
                      <path d="M4.500 12.500V10C1 6 2 2.500 7.500 2.500S14 6 10.500 10v2.500" fill="none" stroke="#222" strokeWidth="4" />
                      <path d="M4.500 12.500V10C1 6 2 2.500 7.500 2.500S14 6 10.500 10v2.500" fill="none" stroke={sel ? "#9cc9ee" : "#c9c9c9"} strokeWidth="2.200" />
                      <path d="M2.500 10.500h3M9.500 10.500h3M2.500 13h3.500M9 13h3.500" stroke="#e01818" strokeWidth="1.300" />
                    </svg>
                    <div className="ml-[24px] h-[14px] w-[18px] shrink-0 border-r border-b border-[#777]" style={{ background: c }} />
                    <div className="w-[77px] pl-[5px]"><Fit w={n.length * 6}>{n}</Fit></div>
                  </div>
                </div>
              );
            })}
            <svg className="absolute left-0 top-0" width="34" height="255" viewBox="0 0 34 255" shapeRendering="crispEdges" fill="none">
              <path d="M7.500 9v238M7.500 8.500h7M7.500 25.500h7M7.500 212.500h7M7.500 229.500h7M7.500 246.500h7M22.500 34v161M22.500 42.500h7M22.500 59.500h7M22.500 76.500h7M22.500 93.500h7M22.500 110.500h7M22.500 127.500h7M22.500 144.500h7M22.500 161.500h7M22.500 178.500h7M22.500 195.500h7" stroke="#999" strokeDasharray="1 1" />
              {[25.5, 212.5, 246.5].map((y, k) => (
                <g key={y}>
                  <rect x="3.500" y={y - 4} width="8" height="8" fill="#fff" stroke="#888" />
                  <path d={k ? `M5 ${y}h5M7.500 ${y - 2.5}v5` : `M5 ${y}h5`} stroke="#000" />
                </g>
              ))}
            </svg>
          </div>
        </div>
      </div>
      <div className="flex h-[23px] text-white">
        <div className="ml-[4px] flex h-[20px] w-[23px] items-center rounded-b-[4px] bg-[linear-gradient(#ccd0d5,#fff)] pl-[4px] text-black"><Fit w={18}>La...</Fit></div>
        <Track from={27} className="pb-[2px]" items={PANE_TABS.map(([a, b, s]) => ({ a, s: b - a, n: <Fit w={b - a}>{s}</Fit> }))} />
      </div>
    </div>
  );
}

/* Model geometry, in window pixels */
function ModelDrawing() {
  const hex = (cx: number, cy: number) => `${cx - 23},${cy} ${cx - 12},${cy - 23.5} ${cx + 12},${cy - 23.5} ${cx + 23.5},${cy} ${cx + 12},${cy + 23.5} ${cx - 12},${cy + 23.5}`;
  return (
    <svg className="absolute left-0 top-0" width="1521" height="716" viewBox="327 209 1521 716" fontFamily="Liberation Sans, sans-serif" fontWeight="700">
      <defs>
        <linearGradient id="ph" x1="0" y1="0" x2="0" y2="1"><stop offset="0" stopColor="#2b2b2b" /><stop offset="0.450" stopColor="#4c4c4c" /><stop offset="1" stopColor="#2b2b2b" /></linearGradient>
        <linearGradient id="pv"><stop offset="0" stopColor="#222" /><stop offset="0.500" stopColor="#4c4c4c" /><stop offset="1" stopColor="#222" /></linearGradient>
        <linearGradient id="gv"><stop offset="0" stopColor="#063" /><stop offset="0.500" stopColor="#2c2" /><stop offset="1" stopColor="#052" /></linearGradient>
      </defs>
      <g shapeRendering="crispEdges">
        <path d="M715 209v41M735 209v30" stroke="#2f6f2f" fill="none" />
        <path d="M705 249.500h25" stroke="#23238a" />
      </g>
      <path d="M735 239.500h50v-10l39.500 20-39.500 20v-10H725" stroke="#8b2b2f" fill="none" />
      <circle cx="725" cy="249.500" r="9.500" fill="none" stroke="#222" strokeDasharray="2 1" />
      <path d="M725 249.500V240a9.500 9.500 0 0 0-9.500 9.500zM725 249.500V259a9.500 9.500 0 0 0 9.500-9.500z" fill="#000" />
      <rect x="719" y="244" width="12" height="12" fill="#b0b0b0" opacity="0.750" />
      <rect x="737" y="244" width="12" height="12" fill="#a9a9a9" />

      <text x="1642" y="402" fontSize="18.500" textLength="204">Ordinary Group II 0.20</text>
      <path d="M1848 249H1786V298H1785V378H1784V459H1783V537H1786V541H1848V534H1790V459H1791V378H1792V298H1793V256H1848z" fill="#000" />
      <path d="M1817 353.500h31M1817 356.500h31" stroke="#7d2f33" strokeWidth="2" />
      <path d="M1684 402v119h104" stroke="#6c6c6c" strokeDasharray="18 10" fill="none" />
      <rect x="1708" y="387" width="140" height="10" fill="url(#ph)" />
      <rect x="1693" y="402" width="10" height="66" fill="url(#pv)" />
      <path d="M1687 386h3v1h16v-1h3v15h-3v-2h-1v4h-15v-4h-1v1h-2z" fill="#ff8c00" />
      <path d="M1690 402.500h15M1688.500 387v12" stroke="#b86000" />
      <path d="M1811 529c6-62 12-72 24-73h13" stroke="#c9c9c9" fill="none" />
      <circle cx="1811" cy="530" r="6" fill="none" stroke="#111" strokeDasharray="2 1" />
      <circle cx="1811" cy="530" r="4" fill="#000" />
      <path d="M1814 540l34 100" stroke="#000" strokeWidth="1.300" />
      <path d="M1704 484l36 64M1708 483l24 15" stroke="#000" strokeWidth="1.300" />
      <polygon points={hex(1751.5, 527)} fill="#ff0" stroke="#111" />
      <polygon points={hex(1751.5, 574.5)} fill="#ff0" stroke="#111" />
      <polygon points={hex(1865, 679)} fill="#ff0" stroke="#111" />
      <text x="1751.500" y="533.500" fontSize="18.500" textAnchor="middle">1</text>
      <text x="1751.500" y="581" fontSize="18.500" textAnchor="middle">6</text>
      <path d="M1736 521h19M1763 521h11" stroke="#777" strokeWidth="2" />
      <circle cx="1697" cy="477" r="8.500" fill="none" stroke="#0b1c8f" strokeWidth="2.500" strokeDasharray="4 2" />
      <path d="M1690 467h14v12a6.500 6.500 0 0 1-14 0z" fill="#ff8c00" stroke="#ffb75a" strokeWidth="0.600" />
      <path d="M1686 477h5M1690 472v10" stroke="#ffe06a" strokeWidth="2" />
      <path d="M1691 489h13q-1 7-6.500 7t-6.500-7z" fill="#d80000" />
      <path d="M1697.500 483v6" stroke="#d22" />
      <rect x="1704" y="474" width="12" height="5" fill="#2a2" />
      <rect x="1716" y="473" width="13" height="7" fill="#ff9d14" />
      <path d="M1708 471v11M1716 471v11M1728 472v10" stroke="#ffe36b" strokeWidth="2" />
      <rect x="1729" y="473" width="10" height="7" fill="#fff" />
      <path d="M1730 484h10M1739 474l2 6" stroke="#ffc84a" strokeWidth="2" />
      <path d="M1715.500 482v25" stroke="#e01020" strokeWidth="2.500" />
      <rect x="1732" y="485" width="6" height="22" fill="url(#gv)" />
      <rect x="1732" y="507" width="6" height="8" fill="#bff59a" />
      <path d="M1731 516l3-3M1739 516l-3-3" stroke="#dfffb0" strokeWidth="1.500" />
    </svg>
  );
}

function DocumentArea() {
  return (
    <div className="ml-[5px] flex w-[1548px] shrink-0 flex-col">
      <div className="flex h-[20px] shrink-0 items-center overflow-hidden border-t border-[#8c8c8c] text-white">
        <Track
          from={324}
          items={[
            ...TABS.map(([a, b, s]) => ({ a, s: b - a, n: <Fit w={b - a}>{s}</Fit> })),
            {
              a: 1418, s: 169,
              n: (
                <div className="mt-[2px] flex h-[18px] w-full items-center rounded-t-[4px] border border-b-0 border-[#dff3f5] bg-[linear-gradient(#dfe3e9,#c9ced6)] pb-[3px] pl-[2px] text-black">
                  <Fit w={144} className="font-bold">Simple Grooved System.cad</Fit>
                  <svg className="ml-[8px] mt-[2px]" width="9" height="9" viewBox="0 0 9 9" stroke="#333" strokeWidth="1.200"><path d="M1 1l7 7M8 1L1 8" /></svg>
                </div>
              ),
            },
            { a: 1838, s: 26, n: <svg width="26" height="11" viewBox="0 0 26 11" fill="none" stroke="#3c3c3c"><path d="M6 1v9L1 5.500zM19 1v9l5-4.500z" /></svg> },
          ]}
        />
      </div>
      <div className="flex h-[763px] shrink-0 flex-col border-2 border-b-[7px] border-r-[7px] border-[#ececec]">
        <div className="h-[3px] shrink-0 border-t border-[#8e8e8e] bg-[#737373]" />
        <div className="flex h-[716px] shrink-0">
          <div className="relative ml-[1px] h-[716px] w-[1521px] shrink-0 overflow-hidden bg-[#5a5a5a] font-[Liberation_Sans,sans-serif]">
            <div className="absolute left-[398px] top-[40px] flex h-[638.5px] w-[730px] flex-col border border-black bg-white leading-none text-black shadow-[0_0_0_0.5px_#000]">
              <div className="flex h-[47px] shrink-0 items-center justify-center border-b-2 border-[#222] pt-[2px]">
                <Fit w={123} className="text-[28px] font-bold">Riser Tag</Fit>
              </div>
              {RISER.map(([l, w, v, vw], k) => (
                <div key={k} className="flex min-h-0 flex-1 items-center pt-[2px] text-[19px] leading-none font-bold">
                  <div className={"flex shrink-0 " + (v ? "w-[501px] pl-[32px]" : "pl-[10px]")}><Fit w={w}>{l}</Fit></div>
                  {v && <Fit w={vw}>{v}</Fit>}
                </div>
              ))}
            </div>
            <ModelDrawing />
          </div>
          <div className="flex flex-1 flex-col justify-center bg-[#f0f0f0] pl-[8px]"><div className="mt-[16px] h-[16px] w-[2px] bg-[#8a8a8a]" /></div>
        </div>
        <div className="flex h-[17px] shrink-0 items-center bg-[#f0f0f0]"><div className="ml-[288px] h-[2px] w-[17px] bg-[#8a8a8a]" /></div>
        <div className="flex flex-1 items-center bg-[linear-gradient(#454545,#747474_25%,#7c7c7c)] pl-[4px]">
          {["M3 3v7M9 3L5 6.500 9 10z", "M8 3L4 6.500 8 10z", "M5 3l4 3.500L5 10z", "M4 3l4 3.500L4 10zM10 3v7"].map((d) => (
            <div key={d} className="mr-[3px] h-[13px] w-[13px] bg-[#e9e9e9]"><svg width="13" height="13" viewBox="0 0 13 13"><path d={d} fill="#333" stroke="#333" /></svg></div>
          ))}
          <div className="relative ml-[3px] h-[17px] w-[114px]">
            <svg className="absolute left-0 top-0" width="114" height="17" viewBox="0 0 114 17">
              <path d="M49 17L60 0h50L99 17z" fill="#c7ccd4" stroke="#eee" />
              <path d="M0 0h61L50 17H3q-3 0-3-3z" fill="#fafafa" />
            </svg>
            <div className="relative flex h-full items-center pl-[7px] text-black">
              <Fit w={39} className="font-bold">*Model</Fit>
              <Fit w={38} className="ml-[13px]">Sheet 1</Fit>
            </div>
          </div>
        </div>
      </div>
    </div>
  );
}

const DockMore = ({ h }: { h: number }) => (
  <div className="flex shrink-0 items-center justify-end bg-[linear-gradient(90deg,#4f5661,#a9afb9)] pr-[2px]" style={{ height: h }}>
    <svg width="14" height="13" viewBox="0 0 14 13" shapeRendering="crispEdges"><path d="M2 1v10" stroke="#444" strokeWidth="2" /><path d="M4 2v10" stroke="#fff" /><path d="M7 1l6 5-6 5z" fill="#333" /><path d="M8 12l5-5" stroke="#fff" /></svg>
  </div>
);
const DockBar = ({ from, to, items }: { from: number; to: number; items: Item[] }) => (
  <div className="shrink-0 rounded-[3px] bg-[linear-gradient(90deg,#cfd2d7,#c2c6cd_45%,#939aa5)]" style={{ height: to - from }}>
    <Track vertical from={from} items={[{ a: from + 4, s: 2, n: <Dots vertical /> }, ...items]} />
  </div>
);
const di = (c: number, n: string): Item => ({ a: c - 15, s: 28, n: <Icon n={n} w={32} h={30} /> });
const dsep = (c: number): Item => ({ a: c - 1, s: 2, n: <div className="h-[2px] w-[28px] border-t border-[#777] bg-white" /> });

export default function App() {
  return (
    <div className="flex h-[1032px] w-[1920px] flex-col overflow-hidden bg-[#535353] font-[Open_Sans,Noto_Sans,sans-serif] text-[11px]">
      <TitleBar />
      <MenuBar />
      <div className="flex h-[46px] shrink-0 gap-[1px]">
        <Bar from={0} to={687} items={[
          i(33, "new"), i(77, "open"), i(120, "save"), i(164, "gear"), i(209, "wrench"), i(253, "lock"), i(296, "gearG"), i(340, "gearR"),
          t(366, 462, "Load Toolbar State"), t(472, 566, "Save Toolbar State"), t(576, 660, "Show Start Page"),
        ]} />
        <Bar from={688} to={1853} items={[
          i(720, "helmet"), i(762, "wandO"), i(807, "wandE"), i(852, "wandH"), i(895, "wandT"), i(939, "pipeDrop"), i(982, "swirl"),
          t(1010, 1103, "Remote Area Table", true), i(1132, "plot"), i(1176, "plusminus"), t(1202, 1294, "Analysis Reports..."), i(1322, "plotG"),
          t(1348, 1559, "Keep Hydraulically Most Demanding Area", true), t(1568, 1614, "Riser Tag"), i(1642, "three"),
          t(1668, 1730, "Renumber...", true), t(1739, 1781, "Cleanup", true), i(1809, "nodes"),
        ]} />
      </div>
      <div className="flex h-[46px] shrink-0">
        <Bar from={0} to={1890} items={[
          t(14, 72, "Pipe Outlet"), i(100, "pipeR"), i(144, "wye"), i(187, "cap"), i(232, "elbowD"), i(274, "coup"), i(318, "cross"), i(362, "elbow"), i(406, "cap2"), i(451, "hose"),
          t(478, 566, "Mechanical Cross"), t(575, 653, "Mechanical Tee"), i(681, "bell"), t(707, 742, "Saddle"), t(751, 811, "Seismic Flex"),
          i(837, "tee"), i(881, "coup3"), i(927, "valve"), i(971, "reducer"), i(1015, "pump"), i(1058, "headU"), i(1102, "headD"), i(1145, "headS"), i(1191, "ball"),
          t(1216, 1320, "Hydraulic Wormhole"), i(1346, "hydrant"), t(1374, 1414, "Strainer"), i(1442, "wall"), i(1484, "crossR"), i(1530, "hang"), i(1573, "schedule"),
          t(1599, 1695, "Hanger Assembly..."), i(1724, "hangG"), i(1767, "crossG"), t(1793, 1862, "Parts Profile..."),
        ]} />
      </div>
      <div className="flex h-[46px] shrink-0">
        <Bar from={0} to={571} items={[
          t(15, 88, "Create Detail...", true), i(117, "det1"), i(160, "det2"), t(186, 244, "Hide Layers", true), t(253, 320, "Isolate Layers", true),
          t(330, 412, "Unisolate Layers", true), t(422, 543, "Interference Checking...", true),
        ]} />
        <Bar from={571} to={1307} items={[
          t(585, 707, "Hydraulic Calculations..."), i(735, "graph"), i(779, "book"), i(823, "sheet"), i(867, "lasso"), i(910, "newsheet"), i(955, "eraser"), i(998, "layout"),
          i(1043, "scroll"), i(1086, "printG"), i(1131, "props"), i(1175, "print"), i(1220, "plugG"), i(1263, "win"),
        ]} />
        <Bar from={1307} to={1693} items={[
          i(1339, "elev"), t(1365, 1444, "Elevate to Pipes", true), t(1454, 1533, "Elevate Beams..."), i(1561, "g1"), i(1605, "g2"), i(1649, "g3"),
        ]} />
        <Bar from={1693} to={1909} items={[i(1725, "beam"), i(1769, "star"), t(1795, 1881, "Sprinkler Legend")]} />
      </div>

      <div className="flex h-[802px] shrink-0">
        <div className="flex w-[1872px] shrink-0 flex-col">
          <div className="flex h-[783px] shrink-0">
            <LayersPane />
            <DocumentArea />
          </div>
          <div className="flex h-[19px] shrink-0 bg-[linear-gradient(#444855,#3d404c_42%,#2d2d2d_44%,#333)] text-white">
            <Track
              from={0}
              className="pt-[1px]"
              items={[
                { a: 4, s: 91, n: <Fit w={91}>For Help, press F1</Fit> },
                ...([[1627, 1631, 1682, "0 selected"], [1690, 1694, 1745, "Elev1: 2'-3"], [1753, 1757, 1806, "Text table"], [1809, 1813, 1839, "# Off"], [1842, 1846, 1870, "Foot"]] as [number, number, number, string][]).flatMap(
                  ([s, a, b, x]) => [
                    { a: s, s: 1, n: <div className="h-[15px] w-px bg-[#777]" /> },
                    { a, s: b - a, n: <Fit w={b - a}>{x}</Fit> },
                  ],
                ),
              ]}
            />
          </div>
        </div>
        <div className="ml-[1px] flex w-[47px] flex-col">
          <DockBar from={184} to={395} items={[
            { a: 201, s: 65, n: <Fit vertical w={65} className="text-black">Import DWG</Fit> }, di(290, "dwg"), di(332, "pages"), di(373, "cubes"),
          ]} />
          <DockMore h={22} />
          <DockBar from={417} to={695} items={[di(448, "r1"), di(490, "r2"), dsep(515), di(538, "r3"), di(582, "r4"), dsep(607), di(632, "r5"), di(676, "r6")]} />
          <DockMore h={22} />
          <DockBar from={717} to={957} items={[
            { a: 733, s: 31, n: <Fit vertical w={31} className="text-black">GLSL</Fit> },
            {
              a: 767, s: 63,
              n: (
                <div className="flex h-[63px] w-[43px] items-center justify-center rounded-[2px] border border-[#e0b070] bg-[linear-gradient(#fcd9ad_0%,#fdc585_30%,#ffac48_32%,#fdbf63_60%,#ffe787_92%,#ffe995)]">
                  <Fit vertical w={54} className="text-[12px] text-black">OpenGL®</Fit>
                </div>
              ),
            },
            di(852, "mon1"), di(894, "mon2"), di(936, "lProps"),
          ]} />
          <DockMore h={22} />
        </div>
      </div>

      <div className="flex h-[46px] shrink-0">
        <Bar from={0} to={626} items={[
          t(14, 75, "Reset Panes"), i(102, "panes"), btn(124, 164, "Layers", 128, 158), btn(165, 230, "Parts Picker", 168, 226), btn(231, 269, "Alerts", 235, 264),
          btn(270, 307, "Select", 273, 303), btn(308, 358, "Symbols", 312, 354), i(380, "aL"), t(403, 412, "-Y", true), i(440, "aU"), t(463, 476, "+X", true),
          i(504, "aR"), t(527, 539, "+Y", true), i(567, "aD"), t(589, 599, "-X", true),
        ]} />
        <Bar from={627} to={769} items={[
          i(656, "go"),
          { a: 685, s: 60, n: <div className="flex h-[15px] w-[60px] items-center bg-white pl-[3px]"><div className="flex h-[14px] w-[19px] items-center bg-[#0078d7] text-white"><Fit w={18}>,,11</Fit></div></div> },
        ]} />
        <Bar from={769} to={1857} items={[
          i(801, "undoS"), i(845, "selG"), i(889, "chk"), i(933, "burst"), i(977, "target"), btn(1000, 1086, "Lock On Target", 1003, 1080),
          i(1108, "zin"), i(1152, "zout"), i(1195, "pU"), i(1240, "pL"), i(1284, "pCCW"), i(1327, "pD"), i(1371, "pR"), i(1417, "pCW"), i(1460, "rotA"), i(1503, "rotB"),
          i(1548, "h1"), i(1592, "h2"), i(1636, "h3"), i(1680, "h4"), i(1723, "expand"), i(1768, "plane"),
          { a: 1790, s: 44, n: <div className="flex h-[41px] w-[44px] items-center justify-center rounded-[2px] border border-[#e9b878] bg-[linear-gradient(#fcd9ad_0%,#fdc585_32%,#ffac48_34%,#fdbf63_60%,#ffe787_92%,#ffe995)]"><Icon n="plan" /></div> },
        ]} />
      </div>
    </div>
  );
}
